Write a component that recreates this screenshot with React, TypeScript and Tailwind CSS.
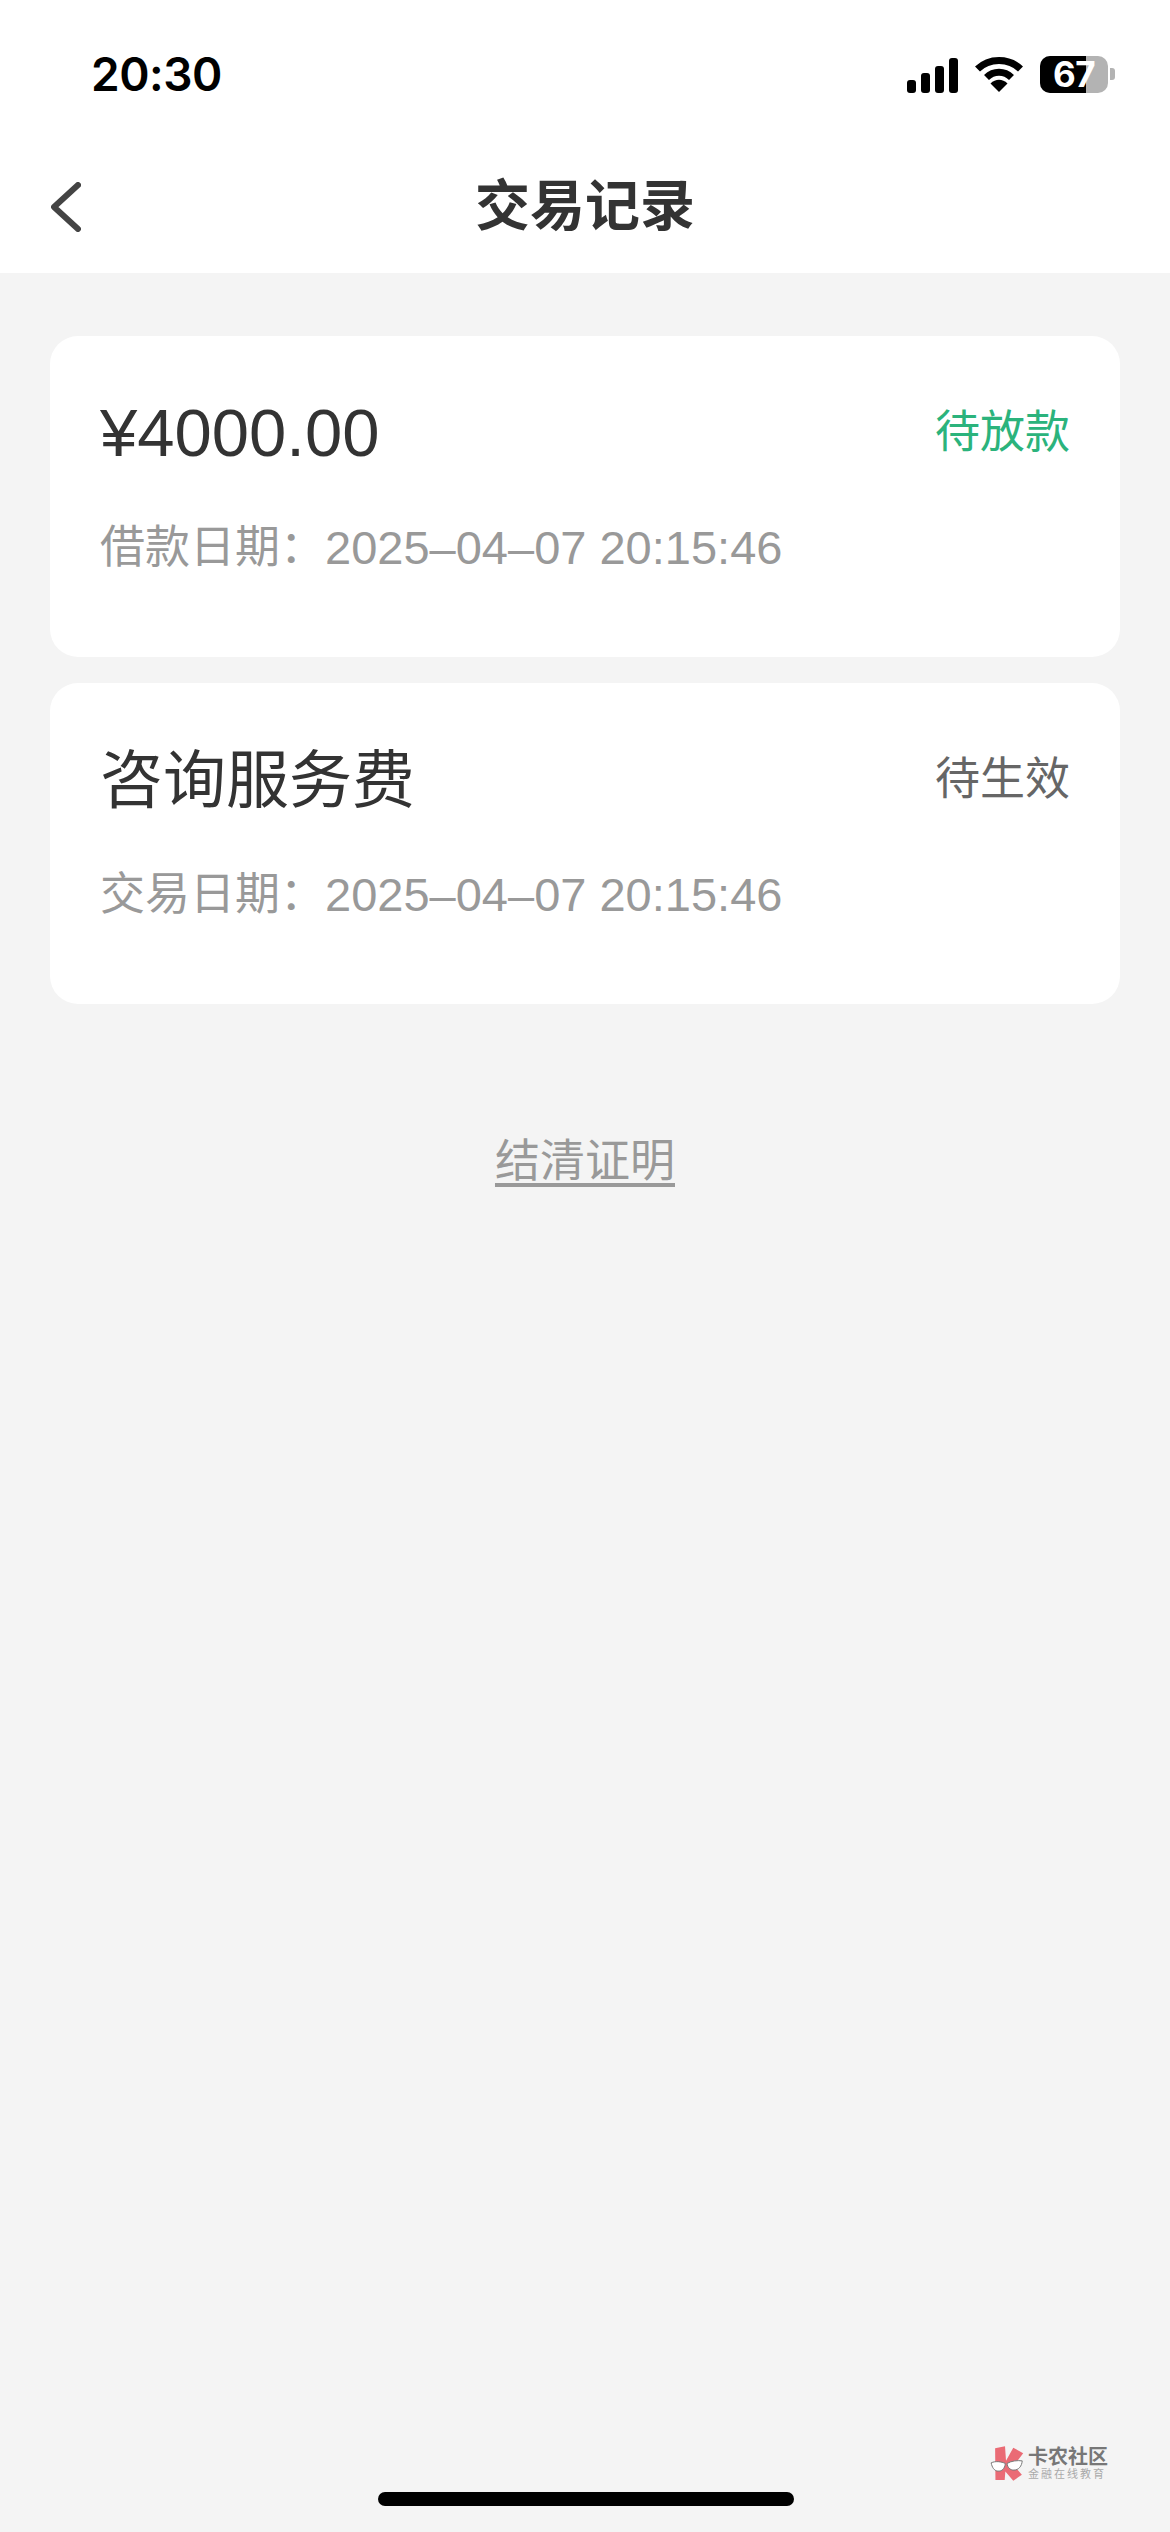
const cjk = "font-['Liberation_Sans','Noto_Sans_CJK_SC',sans-serif]";

function StatusIcons() {
  return (
    <div className="flex items-center gap-[17px]">
      <svg width="51" height="35" viewBox="0 0 51 35" fill="#000" className="mt-[2px]">
        <rect x="0" y="22" width="9" height="13" rx="3" />
        <rect x="14" y="15" width="9" height="20" rx="3" />
        <rect x="28" y="8" width="9" height="27" rx="3" />
        <rect x="42" y="0" width="9" height="35" rx="3" />
      </svg>
      <svg width="48" height="36" viewBox="0 0 48 36" fill="none" stroke="#000" strokeWidth="7">
        <path d="M2.5 13 C14 1.5 34 1.5 45.5 13" />
        <path d="M11.5 21.5 C18.5 14.5 29.5 14.5 36.5 21.5" />
        <path d="M24 36 L15.5 27.5 C20.5 22.5 27.5 22.5 32.5 27.5 Z" fill="#000" stroke="none" />
      </svg>
      <div className="flex items-center gap-[2px]">
        <div className="relative flex h-[37px] w-[68px] items-center justify-center rounded-[10px] bg-[#b3b3b3]">
          <div className="absolute inset-y-0 left-0 w-[46px] rounded-l-[10px] bg-black" />
          <span className="relative font-['Inter',sans-serif] text-[35px] leading-none font-bold tracking-[-0.5px] text-white">67</span>
        </div>
        <div className="h-[12px] w-[5px] rounded-r-[3px] bg-[#b3b3b3]" />
      </div>
    </div>
  );
}

function RecordCard({
  title,
  status,
  statusClass,
  dateLabel,
  amount,
}: {
  title: string;
  status: string;
  statusClass: string;
  dateLabel: string;
  amount?: boolean;
}) {
  return (
    <div className="h-[321px] rounded-[28px] bg-white px-[50px] pt-[57px]">
      <div className="flex h-[80px] items-center justify-between">
        <span className={amount ? "text-[67px] text-[#333333]" : "text-[63px] text-[#333333]"}>{title}</span>
        <span className={`text-[45px] ${statusClass}`}>{status}</span>
      </div>
      <div className="mt-[45px] flex items-center leading-[60px] text-[#999999]">
        <span className="text-[45px]">{dateLabel}：</span>
        <span className="text-[47px]">2025–04–07 20:15:46</span>
      </div>
    </div>
  );
}

function Watermark() {
  return (
    <div className="absolute top-[2445px] left-[990px] flex items-start gap-[3px]">
      <svg width="35" height="37" viewBox="90 70 105 112">
        <path d="M105 80 L135 74 L138 118 L160 78 L190 95 L162 132 L186 160 L160 178 L136 150 L134 176 L106 176 Z" fill="#ea6b75" />
        <path d="M93 124 C106 118 124 120 136 126 C134 142 126 150 113 149 C102 148 96 138 93 124 Z" fill="#fff" stroke="#777" strokeWidth="3" />
        <path d="M141 126 C154 118 172 116 187 118 C186 134 176 146 162 146 C150 146 143 138 141 126 Z" fill="#fff" stroke="#777" strokeWidth="3" />
      </svg>
      <div className="flex flex-col pt-[1px]">
        <span className="text-[20px] leading-[22px] font-bold text-[#777777]">卡农社区</span>
        <span className="text-[11px] leading-[13px] tracking-[2px] text-[#aaaaaa]">金融在线教育</span>
      </div>
    </div>
  );
}

export default function App() {
  return (
    <div className={`relative h-[2532px] w-[1170px] overflow-hidden bg-[#f4f4f4] ${cjk}`}>
      <header className="bg-white">
        <div className="flex h-[130px] items-center justify-between pt-[18px] pr-[55px] pl-[91px]">
          <span className="font-['Inter',sans-serif] text-[46px] leading-none font-semibold tracking-[-0.5px] text-black">20:30</span>
          <StatusIcons />
        </div>
        <div className="relative flex h-[143px] items-center justify-center pt-[10px]">
          <button className="absolute top-[52px] left-[51px]">
            <svg width="30" height="50" viewBox="0 0 30 50" fill="none" stroke="#444444" strokeWidth="6" strokeLinecap="round" strokeLinejoin="round" className="block">
              <path d="M27 3 L3 25 L27 47" />
            </svg>
          </button>
          <h1 className="text-[55px] leading-none font-bold text-[#333333]">交易记录</h1>
        </div>
      </header>

      <main className="flex flex-col gap-[26px] px-[50px] pt-[63px]">
        <RecordCard title="¥4000.00" amount status="待放款" statusClass="text-[#2bb37c]" dateLabel="借款日期" />
        <RecordCard title="咨询服务费" status="待生效" statusClass="text-[#666666]" dateLabel="交易日期" />
      </main>

      <div className="mt-[128px] text-center">
        <a className="text-[45px] leading-[60px] text-[#999999] underline underline-offset-[6px]">结清证明</a>
      </div>

      <Watermark />
      <div className="absolute bottom-[26px] left-[378px] h-[14px] w-[416px] rounded-full bg-black" />
    </div>
  );
}
